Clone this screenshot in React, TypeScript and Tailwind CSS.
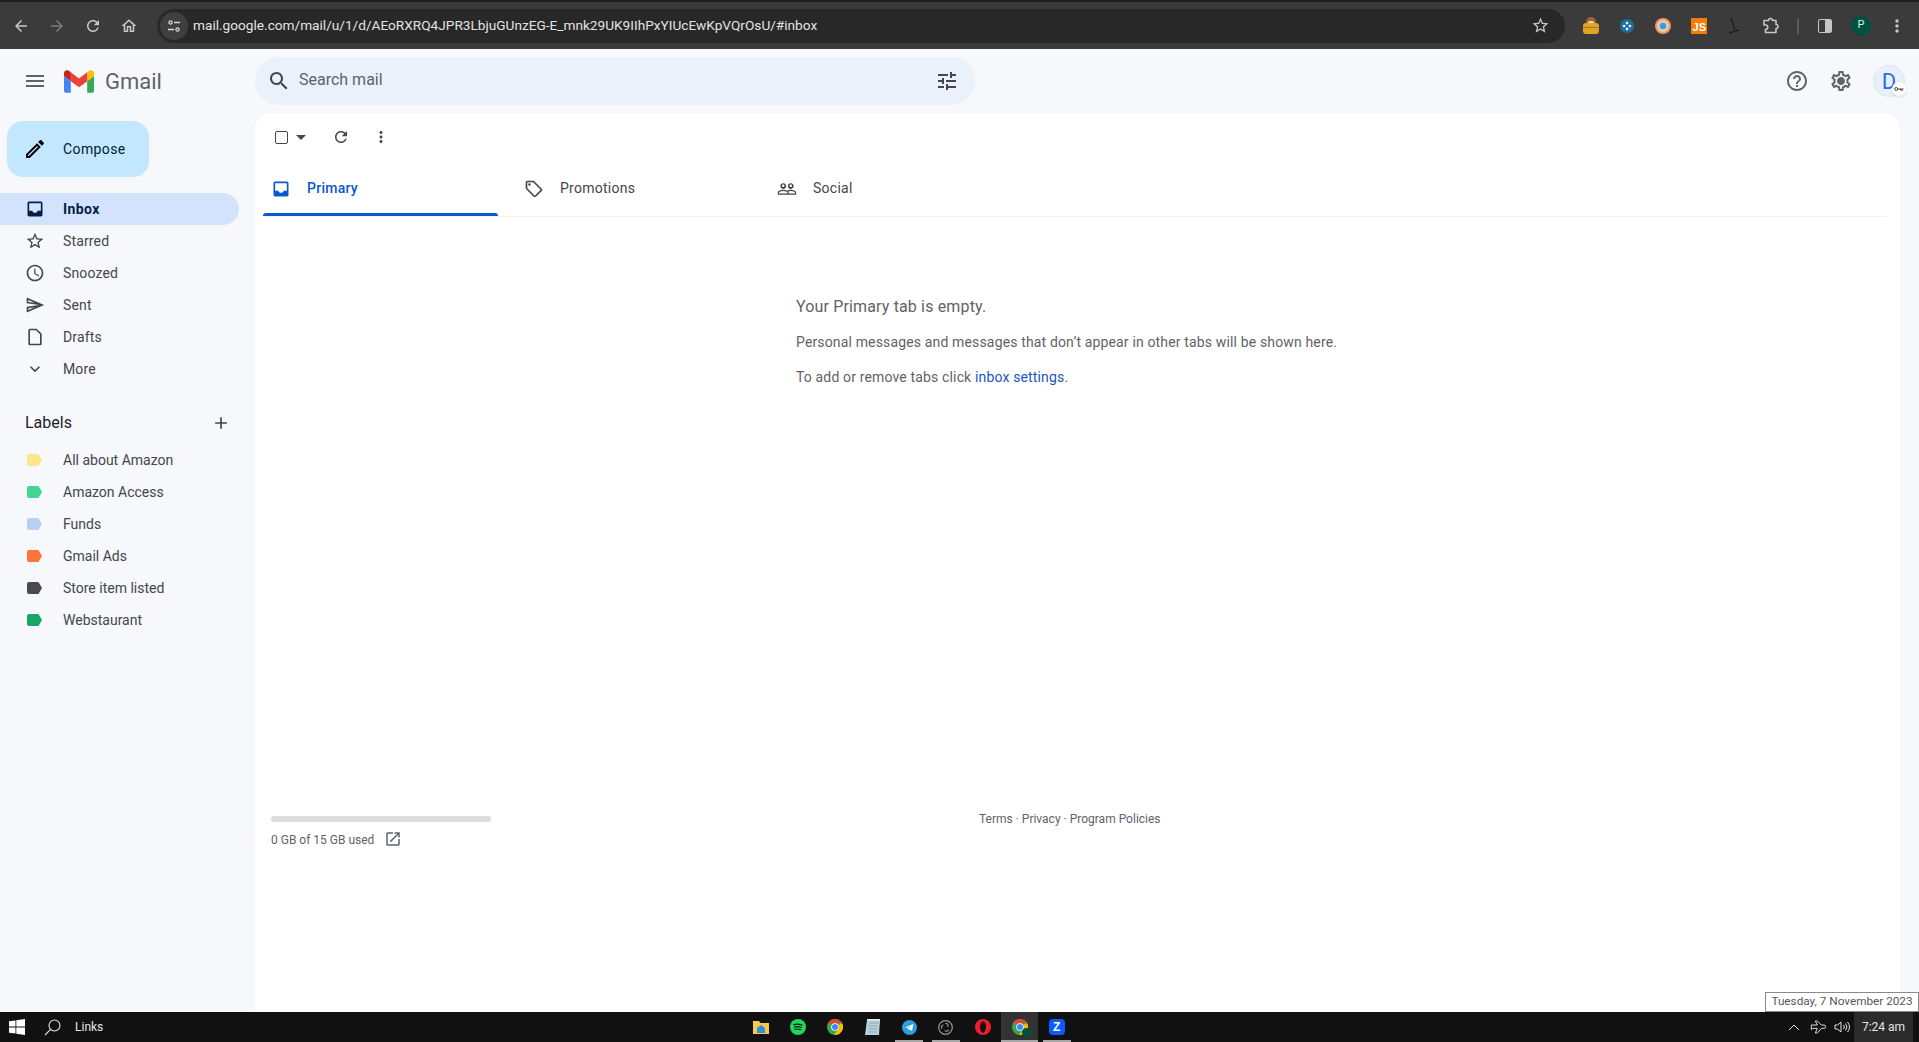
import type { ReactNode } from "react";

const P = {
  inbox: "M19 3H5c-1.1 0-2 .9-2 2v14c0 1.1.9 2 2 2h14c1.1 0 2-.9 2-2V5c0-1.1-.9-2-2-2zm0 11h-4c0 1.66-1.34 2.6-3 2.6S9 15.66 9 14H5V5h14v9z",
  star: "M22 9.24l-7.19-.62L12 2 9.19 8.63 2 9.24l5.46 4.73L5.82 21 12 17.27 18.18 21l-1.63-7.03L22 9.24zM12 15.4l-3.76 2.27 1-4.28-3.32-2.88 4.38-.38L12 6.1l1.71 4.04 4.38.38-3.32 2.88 1 4.28L12 15.4z",
  clock: "M11.99 2C6.47 2 2 6.48 2 12s4.47 10 9.99 10C17.52 22 22 17.52 22 12S17.52 2 11.99 2zM12 20c-4.42 0-8-3.58-8-8s3.58-8 8-8 8 3.58 8 8-3.58 8-8 8zm.5-13H11v6l5.25 3.15.75-1.23-4.5-2.67z",
  send: "M4.01 6.03l7.51 3.22-7.52-1 .01-2.22m7.5 8.72L4 17.97v-2.22l7.51-1M2.01 3L2 10l15 2-15 2 .01 7L23 12 2.01 3z",
  draft: "M14 2H6c-1.1 0-2 .9-2 2v16c0 1.1.9 2 2 2h12c1.1 0 2-.9 2-2V8l-6-6zm4 18H6V4h7.17L18 8.83V20z",
  chevron: "M16.59 8.59L12 13.17 7.41 8.59 6 10l6 6 6-6z",
  pencil: "M14.06 9.02l.92.92L5.92 19H5v-.92l9.06-9.06M17.66 3c-.25 0-.51.1-.7.29l-1.83 1.83 3.75 3.75 1.83-1.83c.39-.39.39-1.02 0-1.41l-2.34-2.34c-.2-.2-.45-.29-.71-.29zm-3.6 3.19L3 17.25V21h3.75L17.81 9.94l-3.75-3.75z",
  search: "M15.5 14h-.79l-.28-.27C15.41 12.59 16 11.11 16 9.5 16 5.91 13.09 3 9.5 3S3 5.91 3 9.5 5.91 16 9.5 16c1.61 0 3.09-.59 4.23-1.57l.27.28v.79l5 4.99L20.49 19l-4.99-5zm-6 0C7.01 14 5 11.99 5 9.5S7.01 5 9.5 5 14 7.01 14 9.5 11.99 14 9.5 14z",
  tune: "M3 17v2h6v-2H3zM3 5v2h10V5H3zm10 16v-2h8v-2h-8v-2h-2v6h2zM7 9v2H3v2h4v2h2V9H7zm14 4v-2H11v2h10zm-6-4h2V7h4V5h-4V3h-2v6z",
  help: "M11 18h2v-2h-2v2zm1-16C6.48 2 2 6.48 2 12s4.48 10 10 10 10-4.48 10-10S17.52 2 12 2zm0 18c-4.41 0-8-3.59-8-8s3.59-8 8-8 8 3.59 8 8-3.59 8-8 8zm0-14c-2.21 0-4 1.79-4 4h2c0-1.1.9-2 2-2s2 .9 2 2c0 2-3 1.75-3 5h2c0-2.25 3-2.5 3-5 0-2.21-1.79-4-4-4z",
  gear: "M19.43 12.98c.04-.32.07-.64.07-.98 0-.34-.03-.66-.07-.98l2.11-1.65c.19-.15.24-.42.12-.64l-2-3.46c-.09-.16-.26-.25-.44-.25-.06 0-.12.01-.17.03l-2.49 1c-.52-.4-1.08-.73-1.69-.98l-.38-2.65C14.46 2.18 14.25 2 14 2h-4c-.25 0-.46.18-.49.42l-.38 2.65c-.61.25-1.17.59-1.69.98l-2.49-1c-.06-.02-.12-.03-.18-.03-.17 0-.34.09-.43.25l-2 3.46c-.13.22-.07.49.12.64l2.11 1.65c-.04.32-.07.65-.07.98 0 .33.03.66.07.98l-2.11 1.65c-.19.15-.24.42-.12.64l2 3.46c.09.16.26.25.44.25.06 0 .12-.01.17-.03l2.49-1c.52.4 1.08.73 1.69.98l.38 2.65c.03.24.24.42.49.42h4c.25 0 .46-.18.49-.42l.38-2.65c.61-.25 1.17-.59 1.69-.98l2.49 1c.06.02.12.03.18.03.17 0 .34-.09.43-.25l2-3.46c.12-.22.07-.49-.12-.64l-2.11-1.65zm-1.98-1.71c.04.31.05.52.05.73 0 .21-.02.43-.05.73l-.14 1.13.89.7 1.08.84-.7 1.21-1.27-.51-1.04-.42-.9.68c-.43.32-.84.56-1.25.73l-1.06.43-.16 1.13-.2 1.35h-1.4l-.19-1.35-.16-1.13-1.06-.43c-.43-.18-.83-.41-1.23-.71l-.91-.7-1.06.43-1.27.51-.7-1.21 1.08-.84.89-.7-.14-1.13c-.03-.31-.05-.54-.05-.74s.02-.43.05-.73l.14-1.13-.89-.7-1.08-.84.7-1.21 1.27.51 1.04.42.9-.68c.43-.32.84-.56 1.25-.73l1.06-.43.16-1.13.2-1.35h1.39l.19 1.35.16 1.13 1.06.43c.43.18.83.41 1.23.71l.91.7 1.06-.43 1.27-.51.7 1.21-1.07.85-.89.7.14 1.13zM12 8c-2.21 0-4 1.79-4 4s1.79 4 4 4 4-1.79 4-4-1.79-4-4-4z",
  tag: "M21.41 11.58l-9-9C12.05 2.22 11.55 2 11 2H4c-1.1 0-2 .9-2 2v7c0 .55.22 1.05.59 1.42l9 9c.36.36.86.58 1.41.58s1.05-.22 1.41-.59l7-7c.37-.36.59-.86.59-1.41s-.23-1.06-.59-1.42zM13 20.01L4 11V4h7v-.01l9 9-7 7.02zM6.5 5A1.5 1.5 0 1 0 6.5 8 1.5 1.5 0 1 0 6.5 5z",
  people: "M16.5 13c-1.2 0-3.07.34-4.5 1-1.43-.67-3.3-1-4.5-1C5.33 13 1 14.08 1 16.25V19h22v-2.75c0-2.17-4.33-3.25-6.5-3.25zm-4 4.5h-10v-1.25c0-.54 2.56-1.75 5-1.75s5 1.21 5 1.75v1.25zm9 0H14v-1.25c0-.46-.2-.86-.52-1.22.88-.3 1.96-.53 3.02-.53 2.44 0 5 1.21 5 1.75v1.25zM7.5 12c1.93 0 3.5-1.57 3.5-3.5S9.43 5 7.5 5 4 6.57 4 8.5 5.57 12 7.5 12zm0-5.5c.83 0 1.5.67 1.5 1.5s-.67 1.5-1.5 1.5S6 8.83 6 8s.67-1.5 1.5-1.5zm9 5.5c1.93 0 3.5-1.57 3.5-3.5S18.43 5 16.5 5 13 6.57 13 8.5s1.57 3.5 3.5 3.5zm0-5.5c.83 0 1.5.67 1.5 1.5s-.67 1.5-1.5 1.5S15 8.83 15 8s.67-1.5 1.5-1.5z",
  refresh: "M17.65 6.35C16.2 4.9 14.21 4 12 4c-4.42 0-7.99 3.58-7.99 8s3.57 8 7.99 8c3.73 0 6.84-2.55 7.73-6h-2.08c-.82 2.33-3.04 4-5.65 4-3.31 0-6-2.69-6-6s2.69-6 6-6c1.66 0 3.14.69 4.22 1.78L13 11h7V4l-2.35 2.35z",
  external: "M19 19H5V5h7V3H5c-1.11 0-2 .9-2 2v14c0 1.1.89 2 2 2h14c1.1 0 2-.9 2-2v-7h-2v7zM14 3v2h3.59l-9.83 9.83 1.41 1.41L19 6.41V10h2V3h-7z",
  back: "M20 11H7.83l5.59-5.59L12 4l-8 8 8 8 1.41-1.41L7.83 13H20v-2z",
  forward: "M4 11h12.17l-5.59-5.59L12 4l8 8-8 8-1.41-1.41L16.17 13H4v-2z",
  home: "M12 5.69l5 4.5V18h-2v-6H9v6H7v-7.81l5-4.5M12 3L2 12h3v8h6v-6h2v6h6v-8h3L12 3z",
  plus: "M19 13h-6v6h-2v-6H5v-2h6V5h2v6h6v2z",
  menu: "M3 18h18v-2H3v2zm0-5h18v-2H3v2zm0-7v2h18V6H3z",
  dots: "M12 8c1.1 0 2-.9 2-2s-.9-2-2-2-2 .9-2 2 .9 2 2 2zm0 2c-1.1 0-2 .9-2 2s.9 2 2 2 2-.9 2-2-.9-2-2-2zm0 6c-1.1 0-2 .9-2 2s.9 2 2 2 2-.9 2-2-.9-2-2-2z",
};

function Icon({ d, size = 20, className = "" }: { d: string; size?: number; className?: string }) {
  return (
    <svg width={size} height={size} viewBox="0 0 24 24" fill="currentColor" className={`shrink-0 ${className}`}>
      <path d={d} />
    </svg>
  );
}

function ChromeButton({ children }: { children: ReactNode }) {
  return <div className="flex h-9 w-9 shrink-0 items-center justify-center">{children}</div>;
}

function ChromeBar() {
  return (
    <div className="shrink-0">
      <div className="h-[2px] bg-[#1e1e1e]" />
      <div className="flex h-[47px] items-center bg-[#3b3b3b] pl-[3px] pr-[4px] text-[#c7c7c7]">
        <ChromeButton><Icon d={P.back} size={18} /></ChromeButton>
        <ChromeButton><Icon d={P.forward} size={18} className="text-[#7c7c7c]" /></ChromeButton>
        <ChromeButton><Icon d={P.refresh} size={18} /></ChromeButton>
        <ChromeButton><Icon d={P.home} size={18} /></ChromeButton>
        <div className="ml-[10px] flex h-[34px] min-w-0 flex-1 items-center rounded-full bg-[#282828]">
          <div className="ml-[3px] flex h-7 w-7 items-center justify-center rounded-full bg-[#3f3f3f]">
            <svg width="14" height="14" viewBox="0 0 14 14" fill="none" stroke="#d8d8d8" strokeWidth="1.3">
              <circle cx="3.5" cy="3.5" r="1.6" />
              <path d="M7 3.5h6M1 10.5h6" />
              <circle cx="10.5" cy="10.5" r="1.6" />
            </svg>
          </div>
          <span className="ml-[5px] text-[13.65px] text-[#e3e3e3]">
            mail.google.com/mail/u/1/d/AEoRXRQ4JPR3LbjuGUnzEG-E_mnk29UK9IIhPxYIUcEwKpVQrOsU/#inbox
          </span>
          <Icon d={P.star} size={19} className="ml-auto mr-[15px]" />
        </div>
        <div className="ml-[8px] flex items-center">
          <ChromeButton>
            <div className="relative h-[17px] w-[16px]">
              <div className="absolute left-[3px] top-0 h-[9px] w-[10px] rounded-t-full bg-[#a0622d]" />
              <div className="absolute left-[5px] top-[4px] h-[3px] w-[6px] rounded-full bg-[#f0d9b5]" />
              <div className="absolute bottom-0 left-0 h-[11px] w-[16px] rounded-[3px] bg-[#e0a526]" />
              <div className="absolute bottom-[6px] left-0 h-[1px] w-[16px] bg-[#a87a14]" />
            </div>
          </ChromeButton>
          <ChromeButton>
            <svg width="14" height="14" viewBox="0 0 14 14">
              <circle cx="7" cy="7" r="7" fill="#1f6f9f" />
              <path d="M7 2.5l1.6 1.6L7 5.7 5.4 4.1zM7 8.3l1.6 1.6L7 11.5 5.4 9.9zM4.1 5.4L5.7 7 4.1 8.6 2.5 7zM9.9 5.4L11.5 7 9.9 8.6 8.3 7z" fill="#fff" />
            </svg>
          </ChromeButton>
          <ChromeButton>
            <svg width="16" height="16" viewBox="0 0 16 16">
              <circle cx="8" cy="8" r="8" fill="#e9996a" />
              <circle cx="8" cy="8" r="6" fill="#f3c7a8" />
              <circle cx="8" cy="8" r="3.2" fill="#2aa2e8" />
            </svg>
          </ChromeButton>
          <ChromeButton>
            <div className="flex h-4 w-4 items-end justify-end bg-[#f57c00] pr-[1px] font-['Liberation_Sans',sans-serif] text-[11px] font-bold leading-[13px] text-white">
              JS
            </div>
          </ChromeButton>
          <ChromeButton>
            <svg width="14" height="18" viewBox="0 0 14 18" fill="none" stroke="#111" strokeWidth="1">
              <path d="M3 1l4 12M1 16l10-3" />
            </svg>
          </ChromeButton>
          <ChromeButton>
            <svg width="18" height="18" viewBox="0 0 18 18" fill="none" stroke="currentColor" strokeWidth="1.6" strokeLinejoin="round">
              <path d="M2 3.5h4.5a2 2 0 0 1 4 0H14v4a2 2 0 0 1 0 4v4H3.5v-3a2 2 0 0 0 0-4.5H2z" />
            </svg>
          </ChromeButton>
          <div className="flex w-[18px] justify-center">
            <div className="h-[16px] w-[2px] bg-[#5a5a5a]" />
          </div>
          <ChromeButton>
            <div className="flex h-[14px] w-[14px] overflow-hidden rounded-[2px] border-[1.5px] border-[#c7c7c7]">
              <div className="w-1/2" />
              <div className="w-1/2 bg-[#c7c7c7]" />
            </div>
          </ChromeButton>
          <ChromeButton>
            <div className="flex h-5 w-5 items-center justify-center rounded-full bg-[#00513f] text-[11px] text-[#d8f3e6]">P</div>
          </ChromeButton>
          <ChromeButton><Icon d={P.dots} size={20} /></ChromeButton>
        </div>
      </div>
    </div>
  );
}

function GmailHeader() {
  return (
    <div className="flex h-16 shrink-0 items-center">
      <div className="flex w-[255px] shrink-0 items-center">
        <Icon d={P.menu} size={24} className="ml-[23px] text-[#5f6368]" />
        <svg width="30" height="23" viewBox="52 42 88 66" className="ml-[17px] shrink-0">
          <path fill="#4285f4" d="M58 108h14V74L52 59v43c0 3.32 2.69 6 6 6" />
          <path fill="#34a853" d="M120 108h14c3.32 0 6-2.69 6-6V59l-20 15" />
          <path fill="#fbbc04" d="M120 48v26l20-15v-8c0-7.42-8.47-11.65-14.4-7.2" />
          <path fill="#ea4335" d="M72 74V48l24 18 24-18v26L96 92" />
          <path fill="#c5221f" d="M52 51v8l20 15V48l-5.6-4.2c-5.94-4.45-14.4-.22-14.4 7.2" />
        </svg>
        <span className="ml-[11px] text-[22px] text-[#5f6368]">Gmail</span>
      </div>
      <div className="flex h-12 w-[720px] items-center rounded-full bg-[#eaf1fb] pl-[12px] pr-[16px] text-[#444746]">
        <Icon d={P.search} size={24} />
        <span className="ml-[8px] pb-[2px] text-[16px] text-[#5f6368]">Search mail</span>
        <Icon d={P.tune} size={24} className="ml-auto" />
      </div>
      <div className="ml-auto flex items-center pr-[14px] text-[#5f6368]">
        <Icon d={P.help} size={24} />
        <Icon d={P.gear} size={24} className="ml-[20px]" />
        <div className="relative ml-[20px] flex h-8 w-8 items-center justify-center rounded-full border border-[#dbe5f5] bg-[#e8f0fa] text-[22px] text-[#2f6bea]">
          D
          <div className="absolute -right-[2px] bottom-0 flex h-[14px] w-[14px] items-center justify-center rounded-full bg-white shadow-sm">
            <svg width="10" height="6" viewBox="0 0 10 6" fill="none" stroke="#444" strokeWidth="1">
              <circle cx="2.2" cy="3" r="1.5" />
              <path d="M3.7 3H9.5M8 3v2M6.5 3v1.5" />
            </svg>
          </div>
        </div>
      </div>
    </div>
  );
}

const NAV = [
  { label: "Inbox", d: P.inbox, active: true },
  { label: "Starred", d: P.star },
  { label: "Snoozed", d: P.clock },
  { label: "Sent", d: P.send },
  { label: "Drafts", d: P.draft },
  { label: "More", d: P.chevron },
];

const LABELS = [
  { label: "All about Amazon", color: "#fde68a" },
  { label: "Amazon Access", color: "#42d692" },
  { label: "Funds", color: "#b9d0f5" },
  { label: "Gmail Ads", color: "#ff7537" },
  { label: "Store item listed", color: "#4a4a4a" },
  { label: "Webstaurant", color: "#16a765" },
];

function Sidebar() {
  return (
    <div className="w-[255px] shrink-0 pt-2">
      <div className="ml-[7px] flex h-14 w-[142px] items-center rounded-2xl bg-[#c2e7ff] pl-[16px] text-[14px] tracking-[0.4px] text-[#001d35]">
        <Icon d={P.pencil} size={24} className="text-black" />
        <span className="ml-[16px]">Compose</span>
      </div>
      <div className="mt-4">
        {NAV.map((n) => (
          <div
            key={n.label}
            className={`flex h-8 w-[239px] items-center rounded-r-full pl-[25px] text-[14px] ${
              n.active ? "bg-[#d3e3fd] font-bold tracking-[0.4px] text-[#041e49]" : "tracking-[0.15px] text-[#444746]"
            }`}
          >
            <Icon d={n.d} size={20} />
            <span className="ml-[18px]">{n.label}</span>
          </div>
        ))}
      </div>
      <div className="mt-[22px] flex h-8 w-[239px] items-center justify-between pl-[25px] pr-[8px]">
        <span className="text-[16px] text-[#1f1f1f]">Labels</span>
        <Icon d={P.plus} size={20} className="text-[#444746]" />
      </div>
      <div className="mt-[5px]">
        {LABELS.map((l) => (
          <div key={l.label} className="flex h-8 items-center pl-[27px] text-[14px] text-[#444746]">
            <svg width="15" height="12" viewBox="0 0 15 12" className="shrink-0">
              <path d="M2 0h8.5c.5 0 1 .2 1.3.6L15 6l-3.2 5.4c-.3.4-.8.6-1.3.6H2a2 2 0 0 1-2-2V2a2 2 0 0 1 2-2z" fill={l.color} />
            </svg>
            <span className="ml-[21px]">{l.label}</span>
          </div>
        ))}
      </div>
    </div>
  );
}

function Tab({ d, label, active }: { d: string; label: string; active?: boolean }) {
  return (
    <div className={`relative flex h-[55px] w-[253px] shrink-0 items-center pl-2 text-[14px] tracking-[0.25px] ${active ? "font-medium text-[#0b57d0]" : "text-[#444746]"}`}>
      <Icon d={d} size={20} />
      <span className="ml-[16px]">{label}</span>
      {active && <div className="absolute bottom-0 left-0 h-[3px] w-[235px] rounded-t-[3px] bg-[#0b57d0]" />}
    </div>
  );
}

function MainPanel() {
  return (
    <div className="mr-[19px] flex-1 rounded-t-2xl bg-white">
      <div className="flex h-12 items-center pl-[20px] text-[#444746]">
        <div className="h-[13px] w-[13px] rounded-[2px] border-[1.5px] border-[#444746]" />
        <svg width="10" height="5" viewBox="0 0 10 5" className="ml-[8px]">
          <path d="M0 0h10L5 5z" fill="#444746" />
        </svg>
        <Icon d={P.refresh} size={18} className="ml-[26px]" />
        <Icon d={P.dots} size={18} className="ml-[22px]" />
      </div>
      <div className="ml-[8px] mr-[13px] flex border-b border-[#f1f1f1]">
        <Tab d={P.inbox} label="Primary" active />
        <Tab d={P.tag} label="Promotions" />
        <Tab d={P.people} label="Social" />
      </div>
      <div className="ml-[541px] mt-[78px] text-[14px] tracking-[0.15px] text-[#5f6368]">
        <div className="text-[16px] leading-6">Your Primary tab is empty.</div>
        <div className="mt-[13px] leading-5">
          Personal messages and messages that don’t appear in other tabs will be shown here.
        </div>
        <div className="mt-[15px] leading-5">
          To add or remove tabs click <span className="text-[#1a56c4]">inbox settings</span>.
        </div>
      </div>
      <div className="ml-[16px] mt-[429px] flex text-[12px] text-[#5f6368]">
        <div className="w-[220px]">
          <div className="h-[6px] rounded-full bg-[#dadce0]" />
          <div className="mt-[9px] flex items-center leading-4">
            0 GB of 15 GB used
            <Icon d={P.external} size={18} className="ml-[10px] -translate-y-[1px] text-[#5f6368]" />
          </div>
        </div>
        <div className="-mt-[5px] ml-[488px] leading-4">Terms · Privacy · Program Policies</div>
      </div>
    </div>
  );
}

function TaskItem({ children, active, open }: { children: ReactNode; active?: boolean; open?: boolean }) {
  return (
    <div className={`relative flex h-[30px] w-[36.9px] shrink-0 items-center justify-center ${active ? "bg-[#333333]" : ""}`}>
      {children}
      {open && <div className={`absolute bottom-0 h-[2px] bg-[#a8a8a8] ${active ? "w-full" : "w-[28px]"}`} />}
    </div>
  );
}

function ChromeLogo({ badge }: { badge?: boolean }) {
  return (
    <div className="relative">
      <svg width="16" height="16" viewBox="0 0 16 16">
        <circle cx="8" cy="8" r="8" fill="#34a853" />
        <path d="M8 0a8 8 0 0 1 6.93 4H8a4 4 0 0 0-3.7 2.5L1.6 3.2A8 8 0 0 1 8 0z" fill="#ea4335" />
        <path d="M14.93 4A8 8 0 0 1 7 15.94L10.6 11A4 4 0 0 0 11.5 6z" fill="#fbbc04" />
        <circle cx="8" cy="8" r="3.8" fill="#fff" />
        <circle cx="8" cy="8" r="3" fill="#4285f4" />
      </svg>
      {badge && <div className="absolute -bottom-[2px] -right-[3px] h-[9px] w-[9px] rounded-full bg-[#00513f]" />}
    </div>
  );
}

function Taskbar() {
  return (
    <div className="relative flex h-[30px] shrink-0 items-center bg-[#111111] text-[#e6e6e6]">
      <div className="flex w-[743px] shrink-0 items-center">
        <svg width="16" height="16" viewBox="0 0 16 16" className="ml-[9px]">
          <path d="M0 2.3l6.5-.9v6.2H0zM7.3 1.3L16 0v7.6H7.3zM0 8.4h6.5v6.2L0 13.7zM7.3 8.4H16V16l-8.7-1.3z" fill="#fff" />
        </svg>
        <svg width="17" height="17" viewBox="0 0 17 17" fill="none" stroke="#e6e6e6" strokeWidth="1.1" className="ml-[19px]">
          <circle cx="10.5" cy="6.5" r="5.5" />
          <path d="M6.6 10.4L1 16" />
        </svg>
        <span className="ml-[14px] text-[12px]">Links</span>
      </div>
      <TaskItem>
        <svg width="16" height="15" viewBox="0 0 16 15">
          <path d="M0 1h6l1.5 2H16v11H0z" fill="#f7c948" />
          <path d="M4 8l4-3 4 3v5H4z" fill="#2f8fdc" />
        </svg>
      </TaskItem>
      <TaskItem>
        <svg width="16" height="16" viewBox="0 0 16 16" fill="none" strokeLinecap="round">
          <circle cx="8" cy="8" r="8" fill="#1ed760" />
          <path d="M3.8 5.6c2.8-.8 5.6-.6 8.4.7M4.3 8c2.3-.6 4.6-.4 7 .6M4.8 10.3c1.9-.5 3.9-.3 5.8.5" stroke="#111" strokeWidth="1.1" />
        </svg>
      </TaskItem>
      <TaskItem><ChromeLogo /></TaskItem>
      <TaskItem>
        <svg width="15" height="16" viewBox="0 0 15 16">
          <path d="M2 1h13l-1 15H0z" fill="#b8d3dc" />
          <path d="M4 4h9M3.7 7h9M3.4 10h9M3.1 13h9" stroke="#7fa2ad" strokeWidth="0.8" />
          <path d="M2 0h13v1.5H2z" fill="#e8e8e8" />
        </svg>
      </TaskItem>
      <TaskItem open>
        <svg width="15" height="15" viewBox="0 0 15 15">
          <circle cx="7.5" cy="7.5" r="7.5" fill="#2b9fe0" />
          <path d="M3 7.4l8.4-3.3-1.4 7-2.4-1.8-1.2 1.2-.3-2.2 3.6-3-4.4 2.7z" fill="#fff" />
        </svg>
      </TaskItem>
      <TaskItem open>
        <svg width="15" height="15" viewBox="0 0 15 15" fill="none" stroke="#9a9a9a" strokeWidth="1.2">
          <circle cx="7.5" cy="7.5" r="6.8" />
          <path d="M7.5 3.5a2.2 2.2 0 0 1 2.2 3.4M10.6 9.8a2.2 2.2 0 0 1-3.8.6M4 8.6a2.2 2.2 0 0 1 1.6-3.6" />
        </svg>
      </TaskItem>
      <TaskItem>
        <svg width="16" height="16" viewBox="0 0 16 16">
          <circle cx="8" cy="8" r="8" fill="#f01c2c" />
          <ellipse cx="8" cy="8" rx="3" ry="5.8" fill="#111" />
        </svg>
      </TaskItem>
      <TaskItem active open><ChromeLogo badge /></TaskItem>
      <TaskItem open>
        <div className="flex h-4 w-4 items-center justify-center rounded-[4px] bg-[#0b5cff] font-['Liberation_Sans',sans-serif] text-[12px] font-bold text-white">Z</div>
      </TaskItem>
      <div className="ml-auto flex h-full items-center">
        <svg width="12" height="7" viewBox="0 0 12 7" fill="none" stroke="#e6e6e6" strokeWidth="1">
          <path d="M1 6l5-5 5 5" />
        </svg>
        <svg width="16" height="16" viewBox="0 0 24 24" fill="none" stroke="#e6e6e6" strokeWidth="1.4" className="ml-[10px]">
          <path d="M2 9h9L8 3h3l6 6h4a2 2 0 0 1 0 5h-4l-6 7H8l3-7H4l-2 2z" />
        </svg>
        <svg width="16" height="16" viewBox="0 0 16 16" fill="none" stroke="#e6e6e6" strokeWidth="1" className="ml-[8px]">
          <path d="M1 6h2.5L7 3v10l-3.5-3H1zM9.5 6a3 3 0 0 1 0 4M11.5 4.5a5.5 5.5 0 0 1 0 7M13.5 3a8 8 0 0 1 0 10" />
        </svg>
        <div className="ml-[4px] flex h-full w-[59px] items-center justify-center bg-[#2b2b2b] text-[12px]">7:24 am</div>
        <div className="w-[6px]" />
      </div>
      {/* clock tooltip sits above the taskbar */}
      <div className="absolute bottom-[30px] right-0 flex h-5 w-[154px] items-center justify-center border border-[#8a8a8a] bg-white text-[11.75px] text-[#575757]">
        Tuesday, 7 November 2023
      </div>
    </div>
  );
}

export default function App() {
  return (
    <div className="flex h-screen w-full flex-col overflow-hidden bg-[#f6f8fc] font-['Roboto',sans-serif]">
      <ChromeBar />
      <GmailHeader />
      <div className="flex min-h-0 flex-1">
        <Sidebar />
        <MainPanel />
      </div>
      <Taskbar />
    </div>
  );
}
